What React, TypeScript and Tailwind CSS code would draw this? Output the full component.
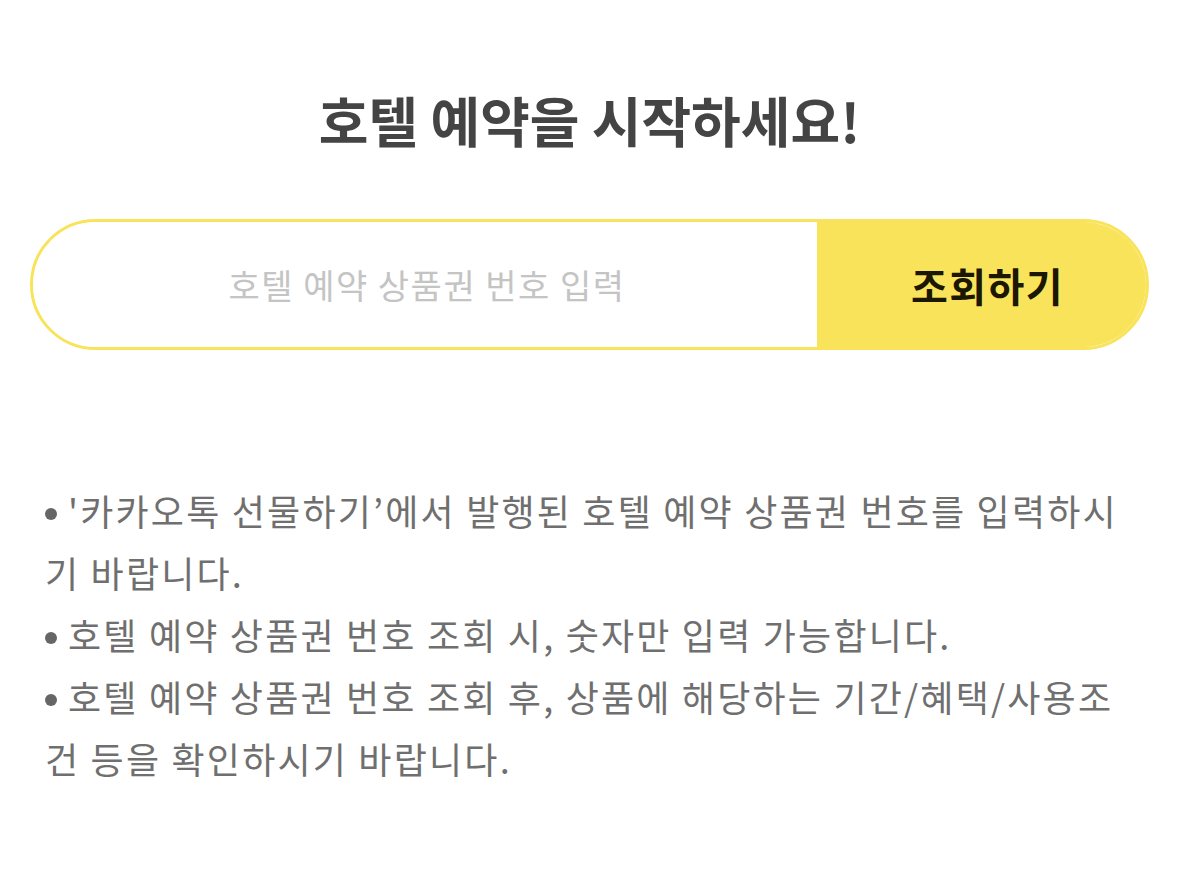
import { useState } from "react";

const notes = [
  "'카카오톡 선물하기’에서 발행된 호텔 예약 상품권 번호를 입력하시기 바랍니다.",
  "호텔 예약 상품권 번호 조회 시, 숫자만 입력 가능합니다.",
  "호텔 예약 상품권 번호 조회 후, 상품에 해당하는 기간/혜택/사용조건 등을 확인하시기 바랍니다.",
];

export default function App() {
  const [code, setCode] = useState("");

  return (
    <main
      className="min-h-screen bg-white px-[30px] pt-[80px]"
      style={{ fontFamily: '"Noto Sans CJK KR", "Noto Sans", sans-serif' }}
    >
      <h1 className="text-center text-[54px] leading-[80px] font-bold text-[#444444]">
        호텔 예약을 시작하세요!
      </h1>

      <div className="mt-[59px] flex h-[131px] overflow-hidden rounded-full border-[3px] border-[#f9e35b]">
        <input
          value={code}
          onChange={(e) => setCode(e.target.value.replace(/[^0-9]/g, ""))}
          placeholder="호텔 예약 상품권 번호 입력"
          className="min-w-0 flex-1 rounded-l-full bg-white pl-[4px] text-center text-[34px] tracking-[1.5px] text-[#333] outline-none placeholder:text-[#c4c4c4]"
        />
        <button className="w-[329px] bg-[#f9e35b] pl-[12px] text-[40px] font-bold tracking-[1.5px] text-[#1b1700]">
          조회하기
        </button>
      </div>

      <ul className="mt-[129px] px-[15px] text-[36px] leading-[62px] tracking-[2.2px] text-[#6f6f6f]">
        {notes.map((note) => (
          <li key={note}>
            <span className="mr-[11px] inline-block h-[12px] w-[12px] rounded-full bg-[#666666] align-[6px]" />
            {note}
          </li>
        ))}
      </ul>
    </main>
  );
}
